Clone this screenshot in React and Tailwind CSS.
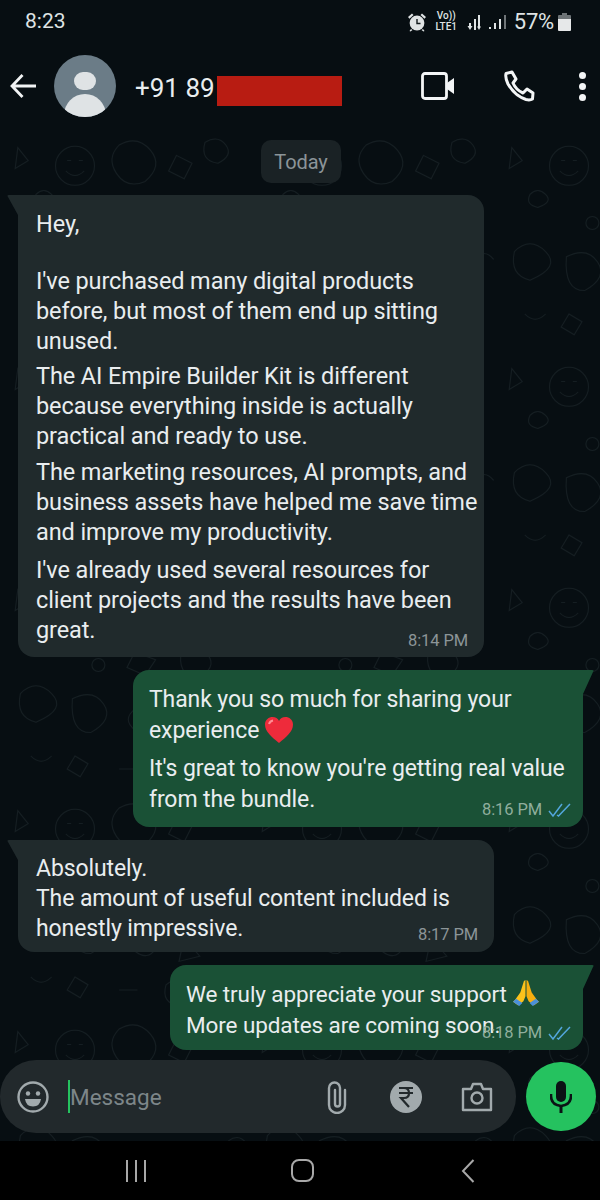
// App.jsx - chat screen
const tickColor = '#53a6dc';

function Wallpaper() {
  return (
    <svg className="absolute inset-0 w-full h-full pointer-events-none" aria-hidden="true">
      <defs>
        <pattern id="doodle" width="190" height="170" patternUnits="userSpaceOnUse" patternTransform="translate(10 132) scale(1.3)">
          <g fill="none" stroke="#151e22" strokeWidth="0.8">
            <circle cx="50" cy="26" r="15" />
            <path d="M43 30q7 7 14 0M44 22h3M53 22h3" />
            <path d="M84 10q14-8 24 4t-4 24q-14 6-22-6t2-22z" />
            <path d="M128 18l12 6-6 12-12-6zM150 8q10-6 16 2t-6 14q-14-2-10-16z" />
            <path d="M6 12l8 10-10 6zM20 48q6-6 12 0t-6 10q-10-2-6-10z" />
            <circle cx="68" cy="70" r="5" />
            <path d="M96 60l16 6-8 12-14-6zM132 58q12-6 20 4t-8 18q-16-2-12-22z" />
            <path d="M8 92q12-12 24 0t-12 22q-16-4-12-22zM48 96q16-8 24 4t-10 22q-16 0-14-26z" />
            <path d="M96 104q6-8 14-2t2 16-16 2-0-16zM134 110l12 14-16 4zM168 96q8-6 14 2M84 150h14" />
            <path d="M16 140q8 8 16 0M50 140l10 6-6 10-10-6zM120 146q10-8 20 0t-10 16q-14-2-10-16z" />
          </g>
        </pattern>
      </defs>
      <rect x="0" y="130" width="600" height="1011" fill="url(#doodle)" />
    </svg>
  );
}

function StatusBar() {
  return (
    <div className="relative z-10 h-[43px] pl-[25px] pr-[29px] flex items-center justify-between text-[#dfe3e4]">
      <span className="text-[21px]">8:23</span>
      <div className="flex items-center">
        <svg width="20" height="20" viewBox="0 0 20 20" fill="#dfe3e4">
          <circle cx="10" cy="11" r="7.4" />
          <path d="M1 5l4-3.400 1.500 1.500-4 3.600zM19 5l-4-3.400-1.500 1.500 4 3.600zM4 17l-1.500 2 1 .6L5.500 18zM16 17l1.500 2-1 .6-2-1.600z" />
          <path d="M10 7v4.500h3.500" fill="none" stroke="#10181b" strokeWidth="1.400" />
        </svg>
        <div className="ml-[7px] w-[25px] flex flex-col items-center text-[10px] leading-[10px] font-medium gap-[1px]">
          <span>Vo))</span>
          <span>LTE1</span>
        </div>
        <svg className="ml-[4px]" width="46" height="20" viewBox="0 0 46 20" fill="#dfe3e4">
          <rect x="6" y="11" width="2" height="5" />
          <path d="M4.500 14h5L7 18z" />
          <rect x="11" y="7" width="2" height="11" />
          <rect x="15" y="3" width="2" height="13" />
          <path d="M14 14.500h4L16 18z" />
          <rect x="26" y="15" width="2" height="2" />
          <rect x="31" y="11" width="2" height="6" />
          <rect x="36" y="7" width="2" height="10" />
          <rect x="41" y="3" width="2" height="14" fill="#6f7578" />
        </svg>
        <span className="ml-[5px] text-[22px] tracking-[-0.2px]">57%</span>
        <svg className="ml-[4px]" width="13" height="18" viewBox="0 0 13 18">
          <path d="M4 0h5v2h3a1 1 0 0 1 1 1v3H0V3a1 1 0 0 1 1-1h3z" fill="#6d7376" />
          <path d="M0 6h13v11a1 1 0 0 1-1 1H1a1 1 0 0 1-1-1z" fill="#e6e8e9" />
        </svg>
      </div>
    </div>
  );
}

function Header() {
  return (
    <div className="relative z-10 h-[86px] flex items-center text-[#e9edef]">
      <svg className="ml-[9px]" width="28" height="28" viewBox="0 0 28 28" fill="none" stroke="#f1f3f4" strokeWidth="2.800">
        <path d="M27 14H3M13.500 3 3 14l10.500 11" />
      </svg>
      <div className="ml-[17px] w-[62px] h-[62px] rounded-full bg-[#6b7c87] overflow-hidden flex flex-col items-center">
        <div className="mt-[17px] w-[22px] h-[24px] rounded-full bg-[#dfe3e5]" />
        <div className="mt-[4px] w-[42px] h-[30px] rounded-t-[21px] bg-[#dfe3e5]" />
      </div>
      <div className="ml-[19px] flex items-center">
        <span className="w-[82px] pt-[4px] text-[26px] leading-none whitespace-nowrap">+91 89</span>
        <div className="mt-[10px] w-[125px] h-[30px] bg-[#b81c12]" />
      </div>
      <svg className="ml-[79px]" width="34" height="28" viewBox="0 0 34 28" fill="none">
        <rect x="1.500" y="1.500" width="24" height="25" rx="2.500" stroke="#f3f5f6" strokeWidth="2.800" />
        <path d="M26 11l7-5v16l-7-5z" fill="#f3f5f6" />
      </svg>
      <svg className="ml-[48px]" width="32" height="32" viewBox="0 0 32 32" fill="none" stroke="#f3f5f6" strokeWidth="3" strokeLinejoin="round">
        <path d="M3 3.500 9 2l4 7-3 4q3 7 10 10l4-4 6 4-.5 6q-2.500 1.500-6.500.5Q12 26 5 14 2 8 3 3.500z" />
      </svg>
      <div className="ml-[44px] flex flex-col gap-[4px]">
        <div className="w-[7px] h-[7px] rounded-full bg-[#f3f5f6]" />
        <div className="w-[7px] h-[7px] rounded-full bg-[#f3f5f6]" />
        <div className="w-[7px] h-[7px] rounded-full bg-[#f3f5f6]" />
      </div>
    </div>
  );
}

function Ticks() {
  return (
    <svg width="24" height="16" viewBox="0 0 24 16" fill="none" stroke={tickColor} strokeWidth="1.500">
      <path d="M1 9l4 5L14 2M9 13l1.500 1L22 2" />
    </svg>
  );
}

function Heart() {
  return (
    <svg className="inline-block ml-[5px] align-[-6px]" width="30" height="28" viewBox="0 0 30 28">
      <path d="M15 27C8 21 1 16 1 8.500 1 3.500 5 1 8.500 1 11.500 1 14 2.500 15 5c1-2.500 3.500-4 6.500-4C25 1 29 3.500 29 8.500 29 16 22 21 15 27z" fill="#ee2b3b" />
      <path d="M5 8q1-3 4-3.500" stroke="#ff8d93" strokeWidth="2" fill="none" />
    </svg>
  );
}

function Pray() {
  return (
    <svg className="inline-block ml-[5px] align-[-4px]" width="28" height="28" viewBox="0 0 27 27">
      <path d="M13 2l-1.500 1-3.500 11-5 7-2 2 5 3.500 5-4 2-5z" fill="#fcc21b" />
      <path d="M14 2l1.500 1 3.500 11 5 7 2 2-5 3.500-5-4-2-5z" fill="#f5ae10" />
      <path d="M1 23l3-3 6 4-3 3zM26 23l-3-3-6 4 3 3z" fill="#4a90d9" />
    </svg>
  );
}

function Bubble({ mine, className, time, ticks, timeClass, children }) {
  return (
    <div className={`relative rounded-[16px] text-[#e9edef] ${mine ? 'bg-[#1a5136] rounded-tr-none' : 'bg-[#202a2c] rounded-tl-none'} ${className}`}>
      {mine ? (
        <svg className="absolute top-0 left-full" width="11" height="24" viewBox="0 0 11 24">
          <path d="M0 0h9q2.500 0 1 2L0 24z" fill="#1a5136" />
        </svg>
      ) : (
        <svg className="absolute top-0 right-full" width="11" height="20" viewBox="0 0 11 20">
          <path d="M11 0H2Q-.5 0 1 2l10 18z" fill="#202a2c" />
        </svg>
      )}
      {children}
      <div className={`absolute flex items-center gap-[6px] text-[16.500px] leading-none ${mine ? 'text-[#8fae9d]' : 'text-[#8c9598]'} ${timeClass}`}>
        <span>{time}</span>
        {ticks && <Ticks />}
      </div>
    </div>
  );
}

function Messages() {
  return (
    <div className="relative z-10 flex-1 flex flex-col tracking-[-0.1px]">
      <div className="mt-[11px] self-center ml-[2px] w-[80px] h-[43px] rounded-[10px] bg-[#1a2225] text-[#8b9498] text-[20px] flex items-center justify-center">Today</div>
      <Bubble className="mt-[12px] ml-[18px] w-[466px] h-[462px] pl-[18px] pt-[14px] text-[23.500px] leading-[30px]" time="8:14 PM" timeClass="right-[16px] bottom-[8px]">
        <p>Hey,</p>
        <p className="mt-[27px]">I've purchased many digital products<br />before, but most of them end up sitting<br />unused.</p>
        <p className="mt-[5px]">The AI Empire Builder Kit is different<br />because everything inside is actually<br />practical and ready to use.</p>
        <p className="mt-[6px]">The marketing resources, AI prompts, and<br />business assets have helped me save time<br />and improve my productivity.</p>
        <p className="mt-[8px]">I've already used several resources for<br />client projects and the results have been<br />great.</p>
      </Bubble>
      <Bubble mine ticks className="mt-[13px] ml-[133px] w-[450px] h-[157px] pl-[16px] pt-[14px] text-[23px] leading-[31px]" time="8:16 PM" timeClass="right-[11px] bottom-[9px]">
        <p>Thank you so much for sharing your<br />experience<Heart /></p>
        <p className="mt-[7px]">It's great to know you're getting real value<br />from the bundle.</p>
      </Bubble>
      <Bubble className="mt-[13px] ml-[18px] w-[476px] h-[112px] pl-[18px] pt-[14px] text-[23px] leading-[30px]" time="8:17 PM" timeClass="right-[16px] bottom-[9px]">
        <p>Absolutely.<br />The amount of useful content included is<br />honestly impressive.</p>
      </Bubble>
      <Bubble mine ticks className="mt-[13px] ml-[170px] w-[413px] h-[85px] pl-[16px] pt-[13px] text-[22.500px] leading-[31px]" time="8:18 PM" timeClass="right-[11px] bottom-[9px]">
        <p>We truly appreciate your support<Pray /><br />More updates are coming soon.</p>
      </Bubble>
    </div>
  );
}

function Composer() {
  return (
    <div className="relative z-10 h-[81px] flex items-start">
      <div className="w-[516px] h-[73px] rounded-[36px] bg-[#22292c] flex items-center text-[#9aa2a5]">
        <svg className="ml-[17px]" width="32" height="32" viewBox="0 0 32 32" fill="none">
          <circle cx="16" cy="16" r="14.500" stroke="#a2aaad" strokeWidth="2.400" />
          <circle cx="11" cy="12.500" r="2.200" fill="#a2aaad" />
          <circle cx="21" cy="12.500" r="2.200" fill="#a2aaad" />
          <path d="M8 18h16q-1 7.500-8 7.500T8 18z" fill="#a2aaad" />
        </svg>
        <div className="ml-[19px] w-[2px] h-[33px] bg-[#25c25f]" />
        <span className="w-[151px] pt-[3px] text-[22.500px] text-[#7d8689]">Message</span>
        <svg className="ml-[105px]" width="22" height="34" viewBox="0 0 22 34" fill="none" stroke="#a2aaad" strokeWidth="2.400" strokeLinecap="round">
          <path d="M19 10v15a8 8 0 0 1-16 0V8a5.500 5.500 0 0 1 11 0v16a2.500 2.500 0 0 1-5 0V10" />
        </svg>
        <div className="ml-[42px] w-[32px] h-[32px] rounded-full bg-[#a2aaad] text-[#22292c] flex items-center justify-center">
          <svg width="16" height="22" viewBox="0 0 16 22" fill="none" stroke="#22292c" strokeWidth="2.200">
            <path d="M1 2h14M1 7h14M3 2h3q5 0 5 5t-5 5H3l8 9" />
          </svg>
        </div>
        <svg className="ml-[39px]" width="32" height="32" viewBox="0 0 32 32" fill="none" stroke="#a2aaad" strokeWidth="2.400">
          <path d="M2 8h8l2-5h8l2 5h8v21H2z" strokeLinejoin="round" />
          <circle cx="16" cy="17" r="5.500" />
        </svg>
      </div>
      <div className="ml-[10px] mt-[2px] w-[70px] h-[69px] rounded-full bg-[#25c25f] flex items-center justify-center">
        <svg width="22" height="32" viewBox="0 0 22 32" fill="#0b1215">
          <rect x="6" y="0" width="10" height="21" rx="5" />
          <path d="M1 13v2q0 9 10 10 10-1 10-10v-2" fill="none" stroke="#0b1215" strokeWidth="2.600" />
          <rect x="9.500" y="24" width="3" height="8" />
        </svg>
      </div>
    </div>
  );
}

function NavBar() {
  return (
    <div className="relative z-10 h-[59px] bg-black flex items-center">
      <div className="ml-[126px] flex gap-[7px]">
        <div className="w-[2px] h-[22px] bg-[#a8a8a8]" />
        <div className="w-[2px] h-[22px] bg-[#a8a8a8]" />
        <div className="w-[2px] h-[22px] bg-[#a8a8a8]" />
      </div>
      <div className="ml-[145px] w-[23px] h-[23px] rounded-[8px] border-2 border-[#a8a8a8]" />
      <svg className="ml-[147px]" width="14" height="24" viewBox="0 0 14 24" fill="none" stroke="#a8a8a8" strokeWidth="2">
        <path d="M12.500 1 2 12l10.500 11" />
      </svg>
    </div>
  );
}

export default function App() {
  return (
    <div className="relative w-[600px] h-[1200px] overflow-hidden bg-[#070e12] flex flex-col font-['Roboto',sans-serif]">
      <Wallpaper />
      <StatusBar />
      <Header />
      <Messages />
      <Composer />
      <NavBar />
    </div>
  );
}
